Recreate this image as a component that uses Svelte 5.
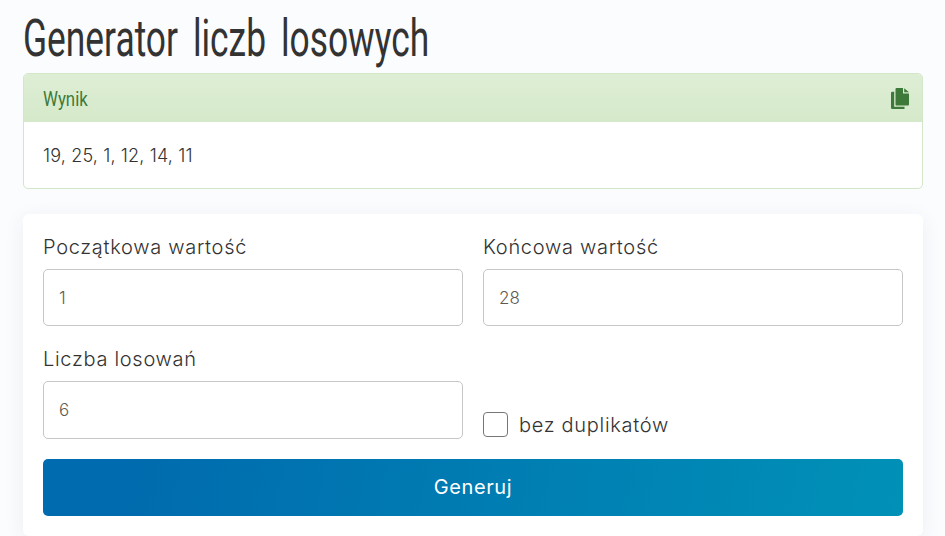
<script>
	let from = $state('1');
	let to = $state('28');
	let count = $state('6');
	let unique = $state(false);
	let numbers = $state('19, 25, 1, 12, 14, 11');

	function generate() {
		const lo = Number(from);
		const hi = Number(to);
		const out = [];
		for (let i = 0; i < Number(count); i++) {
			out.push(lo + Math.floor(Math.random() * (hi - lo + 1)));
		}
		numbers = out.join(', ');
	}
</script>

<main class="page">
	<h1><span>Generator liczb losowych</span></h1>

	<section class="result">
		<header>
			<span>Wynik</span>
			<svg width="19" height="21" viewBox="0 0 19 21" aria-hidden="true">
				<path d="M5.500 0H12v5.500h6V16.500a1 1 0 0 1-1 1H5.500a1 1 0 0 1-1-1V1a1 1 0 0 1 1-1z" fill="#3d7a39" />
				<path d="M13.200 0.300L18 4.300h-4.800z" fill="#3d7a39" />
				<path d="M3.200 3.800v14.900h10.300V21H1.200A1.200 1.200 0 0 1 0 19.800V5a1.200 1.200 0 0 1 1.200-1.200z" fill="#3d7a39" />
			</svg>
		</header>
		<p>{numbers}</p>
	</section>

	<form class="panel" onsubmit={(e) => { e.preventDefault(); generate(); }}>
		<div class="fields">
			<label class="field">
				<span>Początkowa wartość</span>
				<input type="text" bind:value={from} />
			</label>
			<label class="field">
				<span>Końcowa wartość</span>
				<input type="text" bind:value={to} />
			</label>
			<label class="field">
				<span>Liczba losowań</span>
				<input type="text" bind:value={count} />
			</label>
			<label class="check">
				<input type="checkbox" bind:checked={unique} />
				<span>bez duplikatów</span>
			</label>
		</div>
		<button type="submit">Generuj</button>
	</form>
</main>

<style>
	:global(body) {
		margin: 0;
		background: #fbfcfe;
		overflow: hidden;
	}

	.page {
		height: 536px;
		overflow: hidden;
		padding: 0 22px 0 23px;
		color: #333;
		font-family: 'Inter', 'Liberation Sans', sans-serif;
	}

	h1 {
		margin: 0;
		height: 73px;
		font-family: 'Roboto', sans-serif;
		font-size: 52px;
		font-weight: 400;
		line-height: 78px;
		word-spacing: 9px;
		color: #333;
		white-space: nowrap;

		& span {
			display: inline-block;
			transform: scaleX(0.68);
			transform-origin: left;
		}
	}

	.result {
		border: 1px solid #d3e7c8;
		border-radius: 5px;
		background: #fff;
		height: 116px;
		box-sizing: border-box;
		overflow: hidden;

		& header {
			display: flex;
			justify-content: space-between;
			align-items: center;
			box-sizing: border-box;
			height: 48px;
			padding: 0 12px 0 19px;
			background: linear-gradient(#deeed5, #d5e9ca);
			color: #3d7a39;
			font-family: 'Roboto', sans-serif;
			font-size: 21px;

			& span {
				display: inline-block;
				padding-top: 2px;
				transform: scaleX(0.8);
				transform-origin: left;
			}
		}

		& p {
			margin: 0;
			padding: 22px 19px;
			font-family: 'Inter', sans-serif;
			font-size: 18px;
			font-weight: 300;
			line-height: 24px;
			letter-spacing: 0.15px;
		}
	}

	.panel {
		margin-top: 25px;
		padding: 20px;
		background: #fff;
		border-radius: 6px;
		box-shadow: 0 4px 20px rgba(40, 60, 90, 0.07);
	}

	.fields {
		display: grid;
		grid-template-columns: 1fr 1fr;
		column-gap: 20px;
		row-gap: 20px;
	}

	.field {
		display: flex;
		flex-direction: column;
		gap: 8px;
		font-size: 20px;
		font-weight: 350;
		letter-spacing: 0.7px;

		& span {
			line-height: 27px;
		}

		& input {
			box-sizing: border-box;
			width: 100%;
			height: 57.4px;
			padding: 0 15px;
			border: 1px solid #c6c6c6;
			border-radius: 5px;
			background: #fff;
			color: #5f5b50;
			font-family: 'Inter', sans-serif;
			font-size: 17px;
			font-weight: 300;
			letter-spacing: 0;
			outline: none;
		}
	}

	.check {
		display: flex;
		align-items: center;
		gap: 11px;
		align-self: end;
		height: 28px;
		font-size: 20px;
		font-weight: 350;
		letter-spacing: 0.7px;

		& input {
			appearance: none;
			box-sizing: border-box;
			width: 25px;
			height: 25px;
			margin: 0;
			border: 1px solid #777;
			border-radius: 4px;
			background: #fff;
		}
	}

	button {
		display: block;
		width: 100%;
		height: 57px;
		margin-top: 20px;
		border: 0;
		border-radius: 5px;
		background: linear-gradient(100deg, #006bae 10%, #0091b7 100%);
		color: #fff;
		font-family: 'Inter', sans-serif;
		font-size: 20px;
		letter-spacing: 0.6px;
	}
</style>
